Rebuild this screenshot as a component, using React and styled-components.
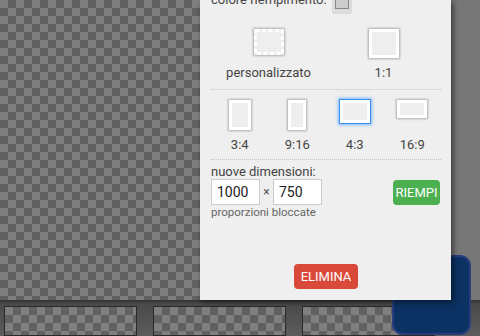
import React from 'react'
import styled, { createGlobalStyle, css } from 'styled-components'

const GlobalStyle = createGlobalStyle`
  html, body {
    margin: 0;
    padding: 0;
    background: #777;
  }
  body {
    font-family: Roboto, "Noto Sans", "Liberation Sans", sans-serif;
  }
`

const checker = (light, dark) => css`
  background: repeating-conic-gradient(${dark} 0 25%, ${light} 0 50%) 0 0 / 16px 16px;
`

const Screen = styled.div`
  position: relative;
  width: 480px;
  height: 336px;
  overflow: hidden;
  display: flex;
  flex-direction: column;
`

const Stage = styled.div`
  display: flex;
  height: 315px;
`

const Canvas = styled.div`
  width: 200px;
  ${checker('#7f7f7f', '#616161')}
`

const RightRail = styled.div`
  flex: 1;
  background: #777;
`

const Panel = styled.aside`
  position: relative;
  z-index: 2;
  width: 251px;
  background: #efefef;
  box-shadow: 2px 2px 6px rgba(0, 0, 0, 0.55);
  display: flex;
  flex-direction: column;
  padding: 0 10px 11px 11px;
  box-sizing: border-box;
  overflow: hidden;
  color: #444;
  font-size: 13px;
`

const FillRow = styled.div`
  display: flex;
  align-items: flex-start;
  gap: 5px;
  margin-top: -8px;
  line-height: 16px;
`

const Swatch = styled.div`
  width: 20px;
  padding: 3px 3px 5px;
  box-sizing: border-box;
  background: #dcdcdc;

  span {
    display: block;
    height: 12px;
    background: #cccccc;
    border: 1px solid #888;
  }
`

const OptionRow = styled.div`
  display: grid;
  grid-template-columns: repeat(${(p) => p.cols}, 1fr);
  margin-top: ${(p) => p.top}px;
`

const Option = styled.div`
  display: flex;
  flex-direction: column;
  align-items: center;
`

const IconSlot = styled.div`
  height: 30px;
  display: flex;
  align-items: flex-start;
`

const Frame = styled.div`
  width: ${(p) => p.w}px;
  height: ${(p) => p.h}px;
  box-sizing: border-box;
  background: #eeeeee;
  border: 3px solid #fff;
  box-shadow: ${(p) =>
    p.selected
      ? '0 0 0 1px #3d8fe6, 0 0 3px 2px rgba(80, 160, 255, 0.7)'
      : '0 0 2px 1px rgba(0, 0, 0, 0.28)'};
`

const DashedFrame = styled.svg`
  display: block;
  box-shadow: 0 0 2px 1px rgba(0, 0, 0, 0.28);
`

const Label = styled.div`
  margin-top: ${(p) => p.gap}px;
  line-height: 16px;
  color: #444;
`

const Divider = styled.div`
  border-top: 1px dotted #c4c4c4;
  margin-top: ${(p) => p.top}px;
`

const FieldLabel = styled.div`
  margin-top: 5px;
  line-height: 14px;
`

const SizeRow = styled.div`
  display: flex;
  align-items: center;
`

const SizeInput = styled.input`
  width: 49px;
  height: 26px;
  box-sizing: border-box;
  border: 1px solid #ccc;
  background: #fff;
  padding: 0 5px;
  font-family: Roboto, "Liberation Sans", sans-serif;
  font-size: 14px;
  color: #222;
  outline: none;
`

const Times = styled.span`
  width: 13px;
  text-align: center;
  font-size: 12px;
  color: #555;
`

const Button = styled.button`
  border: none;
  border-radius: 4px;
  color: #fff;
  font-family: Roboto, "Liberation Sans", sans-serif;
  font-size: 13px;
  height: 25px;
  padding: 0;
  background: ${(p) => p.bg};
  width: ${(p) => p.w}px;
`

const FillButton = styled(Button)`
  margin-left: auto;
  margin-right: 1px;
`

const DeleteButton = styled(Button)`
  margin-top: auto;
  align-self: center;
`

const Hint = styled.div`
  font-size: 11.5px;
  line-height: 15px;
  color: #666;
`

const Filmstrip = styled.div`
  flex: 1;
  display: flex;
  gap: 16px;
  padding: 6px 0 0 4px;
  background: linear-gradient(#333 0, #4a4a4a 4px, #5c5c5c 100%);
`

const Thumb = styled.div`
  flex: none;
  width: 133px;
  height: 30px;
  box-sizing: border-box;
  border: 1px solid #2a2a2a;
  ${checker('#7f7f7f', '#616161')}
`

const FloatingButton = styled.div`
  position: absolute;
  z-index: 1;
  left: 392px;
  top: 255px;
  width: 79px;
  height: 80px;
  box-sizing: border-box;
  border-radius: 11px;
  background: #0b3263;
  border: 2px solid #283c80;
`

const ratios = [
  { name: '3:4', w: 22, h: 30 },
  { name: '9:16', w: 18, h: 30 },
  { name: '4:3', w: 30, h: 23, selected: true },
  { name: '16:9', w: 30, h: 18 },
]

export default function App() {
  return (
    <Screen>
      <GlobalStyle />
      <Stage>
        <Canvas />
        <Panel>
          <FillRow>
            colore riempimento:
            <Swatch>
              <span />
            </Swatch>
          </FillRow>

          <OptionRow cols={2} top={15}>
            <Option>
              <IconSlot>
                <DashedFrame width="30" height="26" viewBox="0 0 30 26">
                  <rect x="0" y="0" width="30" height="26" fill="#eee" />
                  <rect
                    x="1.5"
                    y="1.5"
                    width="27"
                    height="23"
                    fill="none"
                    stroke="#fff"
                    strokeWidth="3"
                    strokeDasharray="4 2.5"
                  />
                </DashedFrame>
              </IconSlot>
              <Label gap={6}>personalizzato</Label>
            </Option>
            <Option>
              <IconSlot>
                <Frame w={30} h={29} />
              </IconSlot>
              <Label gap={6}>1:1</Label>
            </Option>
          </OptionRow>

          <Divider top={8} />

          <OptionRow cols={4} top={10}>
            {ratios.map((r) => (
              <Option key={r.name}>
                <IconSlot>
                  <Frame w={r.w} h={r.h} selected={r.selected} />
                </IconSlot>
                <Label gap={7}>{r.name}</Label>
              </Option>
            ))}
          </OptionRow>

          <Divider top={6} />

          <FieldLabel>nuove dimensioni:</FieldLabel>
          <SizeRow>
            <SizeInput defaultValue="1000" />
            <Times>×</Times>
            <SizeInput defaultValue="750" />
            <FillButton bg="#4caf50" w={47}>RIEMPI</FillButton>
          </SizeRow>
          <Hint>proporzioni bloccate</Hint>

          <DeleteButton bg="#d9493a" w={64}>ELIMINA</DeleteButton>
        </Panel>
        <RightRail />
      </Stage>
      <Filmstrip>
        <Thumb />
        <Thumb />
        <Thumb />
      </Filmstrip>
      <FloatingButton />
    </Screen>
  )
}
